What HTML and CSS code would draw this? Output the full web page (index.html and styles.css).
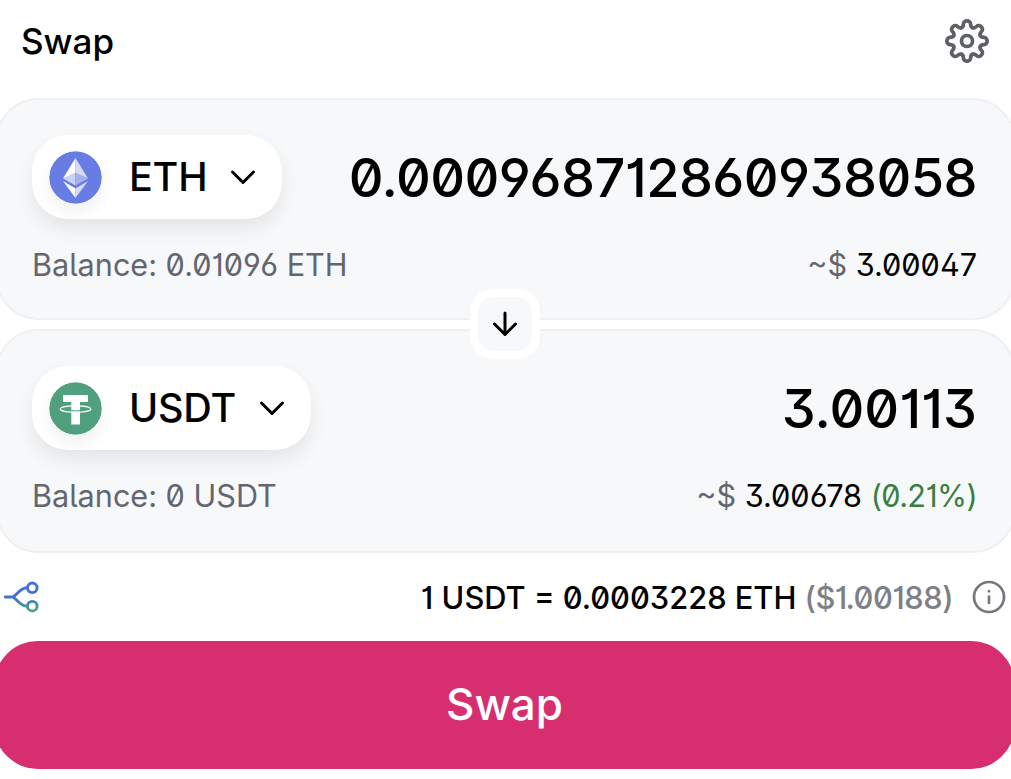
FILE: index.html
```html
<!DOCTYPE html>
<html lang="en">
<head>
  <meta charset="UTF-8">
  <meta name="viewport" content="width=device-width, initial-scale=1">
  <title>Swap</title>
  <link rel="stylesheet" href="styles.css">
</head>
<body>
  <main class="swap">
    <header class="header">
      <h1 class="title">Swap</h1>
      <button class="settings" aria-label="Settings">
        <svg width="46" height="46" viewBox="-23 -23 46 46">
          <defs>
            <path id="tooth" d="M-5.5 -13.3C-4.3 -13.8 -3.6 -15.2 -3.6 -17C-3.6 -21.2 3.6 -21.2 3.6 -17C3.6 -15.2 4.3 -13.8 5.5 -13.3"/>
          </defs>
          <use href="#tooth"/>
          <use href="#tooth" transform="rotate(45)"/>
          <use href="#tooth" transform="rotate(90)"/>
          <use href="#tooth" transform="rotate(135)"/>
          <use href="#tooth" transform="rotate(180)"/>
          <use href="#tooth" transform="rotate(225)"/>
          <use href="#tooth" transform="rotate(270)"/>
          <use href="#tooth" transform="rotate(315)"/>
          <circle r="5.5"/>
        </svg>
      </button>
    </header>

    <section class="panel">
      <div class="row">
        <button class="token">
          <svg class="logo" width="53" height="53" viewBox="0 0 53 53">
            <circle cx="26.5" cy="26.5" r="26.3" fill="#687de3"/>
            <path d="M26.5 7L14 27.5L26.5 22Z" fill="#fff"/>
            <path d="M26.5 7L39 27.5L26.5 22Z" fill="#d5daf7"/>
            <path d="M14 27.5L26.5 22V34.5Z" fill="#cbd1f5"/>
            <path d="M39 27.5L26.5 22V34.5Z" fill="#a5b0ee"/>
            <path d="M14 30L26.5 37.5V47Z" fill="#fff"/>
            <path d="M39 30L26.5 37.5V47Z" fill="#d5daf7"/>
          </svg>
          <span class="symbol">ETH</span>
          <svg class="chevron" width="28" height="18" viewBox="0 0 28 18"><path d="M3.5 4L14 14.5L24.5 4"/></svg>
        </button>
        <span class="amount amount-input">0.000968712860938058</span>
      </div>
      <div class="row details">
        <span class="balance">Balance: 0.01096 ETH</span>
        <span class="fiat"><span class="muted">~$</span> 3.00047</span>
      </div>
      <button class="flip" aria-label="Switch tokens">
        <svg width="28" height="28" viewBox="0 0 28 28"><path d="M14 3V24.5M3.5 14L14 24.5L24.5 14"/></svg>
      </button>
    </section>

    <section class="panel panel-output">
      <div class="row">
        <button class="token">
          <svg class="logo" width="53" height="53" viewBox="0 0 53 53">
            <circle cx="26.5" cy="26.5" r="26.3" fill="#509f7f"/>
            <path d="M14 13H39V20H31V42.5H22.3V20H14Z" fill="#fff"/>
            <ellipse cx="26.5" cy="27" rx="15.2" ry="3.2" fill="none" stroke="#fff" stroke-width="1.3"/>
            <path d="M22.3 28.6Q26.5 29.1 31 28.6" fill="none" stroke="#509f7f" stroke-width="1"/>
          </svg>
          <span class="symbol">USDT</span>
          <svg class="chevron" width="28" height="18" viewBox="0 0 28 18"><path d="M3.5 4L14 14.5L24.5 4"/></svg>
        </button>
        <span class="amount">3.00113</span>
      </div>
      <div class="row details">
        <span class="balance">Balance: 0 USDT</span>
        <span class="fiat"><span class="muted">~$</span> 3.00678 <span class="gain">(0.21%)</span></span>
      </div>
    </section>

    <div class="rate">
      <svg class="route" width="38" height="34" viewBox="0 0 38 34">
        <defs>
          <linearGradient id="routeFill" x1="0" y1="0" x2="0" y2="34" gradientUnits="userSpaceOnUse">
            <stop offset=".5" stop-color="#4070d8"/>
            <stop offset=".9" stop-color="#50a57c"/>
          </linearGradient>
        </defs>
        <g fill="none" stroke="url(#routeFill)" stroke-width="2.9" stroke-linecap="round" stroke-linejoin="round">
          <path d="M2.3 17H10C15 14 17 8 24 7.8M10 17C15 20 17 26 24 26.2"/>
          <circle cx="29.3" cy="7.8" r="4.8"/>
          <circle cx="29.3" cy="26.2" r="4.8"/>
        </g>
      </svg>
      <span class="price">1 USDT = 0.0003228 ETH <span class="price-usd">($1.00188)</span></span>
      <svg class="info" width="34" height="34" viewBox="0 0 34 34">
        <circle cx="17" cy="17" r="15"/>
        <path d="M17 16.5V23M17 11.2V11.3"/>
      </svg>
    </div>

    <button class="submit">Swap</button>
  </main>
</body>
</html>
```
FILE: styles.css
```css
* {
  box-sizing: border-box;
}
body {
  margin: 0;
  background: #fff;
  color: #000;
  font-family: Inter, "Liberation Sans", sans-serif;
  font-feature-settings: "zero", "ss01", "cv01", "cv02", "cv03", "cv04", "cv05", "cv09";
  overflow: hidden;
}
button {
  border: 0;
  padding: 0;
  background: none;
  color: inherit;
  font: inherit;
  font-feature-settings: inherit;
  cursor: pointer;
}
svg {
  display: block;
  flex: none;
}
.swap {
  width: 1011px;
  height: 779px;
}
.header {
  display: flex;
  justify-content: space-between;
  align-items: center;
  height: 98px;
  padding: 0 21px 17px;
}
.title {
  margin: 0;
  font-size: 35px;
  font-weight: 500;
}
.settings svg {
  fill: none;
  stroke: #5d6067;
  stroke-width: 3.7;
  stroke-linecap: round;
}
.panel {
  position: relative;
  height: 222px;
  margin: 0 -4px;
  padding: 35px 36px 0 34px;
  border: 2px solid #eff0f2;
  border-radius: 42px;
  background: #f6f8fa;
}
.panel-output {
  height: 224px;
  margin-top: 9px;
}
.row {
  display: flex;
  justify-content: space-between;
  align-items: center;
}
.token {
  display: flex;
  align-items: center;
  height: 84px;
  padding: 0 25px 0 17px;
  border-radius: 36px;
  background: #fff;
  box-shadow: 0 10px 20px rgba(0, 0, 0, 0.08);
}
.logo {
  border-radius: 50%;
  box-shadow: 0 8px 16px rgba(0, 0, 0, 0.06);
}
.symbol {
  margin: 0 22px 0 27px;
  font-size: 39.5px;
  font-weight: 500;
  letter-spacing: -0.2px;
}
.chevron,
.flip svg {
  fill: none;
  stroke: #000;
  stroke-width: 3;
  stroke-linecap: round;
  stroke-linejoin: round;
}
.amount {
  font-size: 54px;
  font-weight: 500;
}
.amount-input {
  letter-spacing: -0.55px;
}
.details {
  height: 36px;
  margin-top: 27px;
  font-size: 30.6px;
}
.balance,
.muted {
  color: #63666e;
}
.gain {
  color: #39803f;
  letter-spacing: -0.6px;
}
/* sits over the gap between the two panels */
.flip {
  position: absolute;
  z-index: 1;
  top: 189px;
  left: 472px;
  display: flex;
  align-items: center;
  justify-content: center;
  width: 70px;
  height: 70px;
  border: 8px solid #fff;
  border-radius: 23px;
  background: #f6f8fa;
}
.rate {
  display: flex;
  align-items: center;
  height: 88px;
  padding: 0 5px 0 3px;
  font-size: 30.8px;
  font-weight: 500;
}
.price {
  margin: 0 19px 0 auto;
}
.price-usd {
  color: #7d8087;
  letter-spacing: -0.5px;
}
.info {
  fill: none;
  stroke: #73767c;
  stroke-width: 2.7;
  stroke-linecap: round;
}
.submit {
  display: block;
  width: 1021px;
  height: 128px;
  margin-left: -6px;
  padding-bottom: 2px;
  border-radius: 44px;
  background: #d72e6f;
  color: #fff;
  font-size: 44px;
  font-weight: 500;
}
```
